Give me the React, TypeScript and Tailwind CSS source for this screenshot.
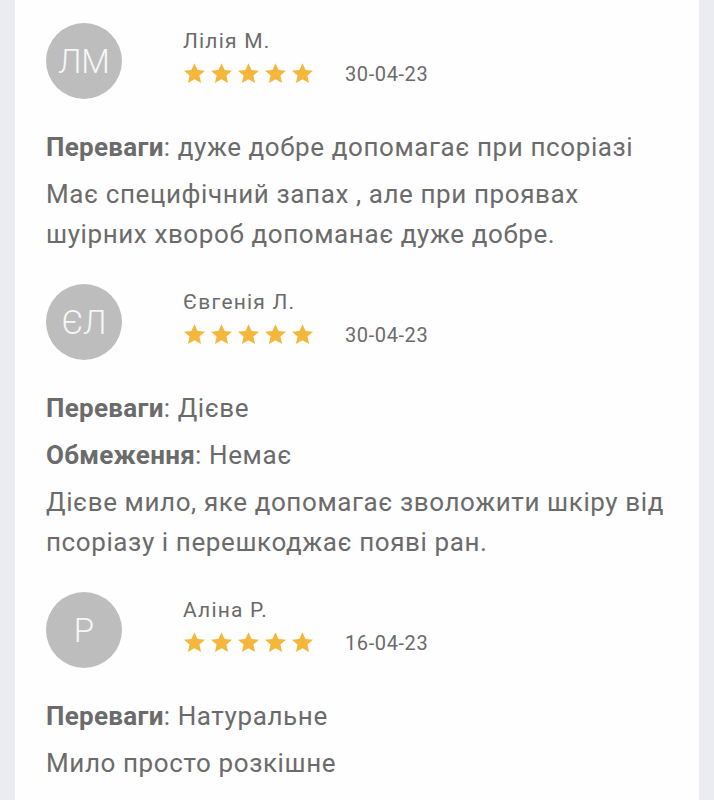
import React from "react";

const Star = () => (
  <svg width="23" height="23" viewBox="0 0 24 24" aria-hidden="true">
    <path
      d="M12 1.2l3.2 7.2 7.8.7-5.9 5.1 1.8 7.7L12 17.9l-6.9 4 1.8-7.7L1 9.1l7.8-.7z"
      fill="#f4b63b"
    />
  </svg>
);

type Review = {
  initials: string;
  name: string;
  date: string;
  pros: string;
  cons?: string;
  text: string[];
};

const reviews: Review[] = [
  {
    initials: "ЛМ",
    name: "Лілія М.",
    date: "30-04-23",
    pros: "дуже добре допомагає при псоріазі",
    text: ["Має специфічний запах , але при проявах", "шуірних хвороб допоманає дуже добре."],
  },
  {
    initials: "ЄЛ",
    name: "Євгенія Л.",
    date: "30-04-23",
    pros: "Дієве",
    cons: "Немає",
    text: ["Дієве мило, яке допомагає зволожити шкіру від", "псоріазу і перешкоджає появі ран."],
  },
  {
    initials: "Р",
    name: "Аліна Р.",
    date: "16-04-23",
    pros: "Натуральне",
    text: ["Мило просто розкішне"],
  },
];

function ReviewItem({ r }: { r: Review }) {
  return (
    <div className="mb-[30px]">
      <div className="flex items-start">
        <div className="w-[76px] h-[76px] rounded-full bg-[#bdbdbd] flex items-center justify-center shrink-0">
          <span className="text-[33px] font-light text-[#f7f7f7] leading-none">{r.initials}</span>
        </div>
        <div className="ml-[61px] pt-[6px] flex flex-col">
          <div className="text-[21px] leading-[24px] tracking-[1.2px] text-[#6b6b6b]">{r.name}</div>
          <div className="flex items-center mt-[8px] h-[24px]">
            <div className="flex items-center gap-[4px]">
              <Star />
              <Star />
              <Star />
              <Star />
              <Star />
            </div>
            <span className="ml-[31px] text-[20px] tracking-[0.6px] text-[#6b6b6b] leading-[24px] mt-[2px]">
              {r.date}
            </span>
          </div>
        </div>
      </div>
      <div className="mt-[28px] text-[26px] leading-[40px] tracking-[0.6px] text-[#6b6b6b]">
        <p className="mb-[7px]">
          <span className="font-bold tracking-[0.3px]">Переваги</span>: {r.pros}
        </p>
        {r.cons && (
          <p className="mb-[7px]">
            <span className="font-bold tracking-[0.3px]">Обмеження</span>: {r.cons}
          </p>
        )}
        <p className="mb-[7px]">
          {r.text.map((t, i) => (
            <React.Fragment key={i}>
              {t}
              {i < r.text.length - 1 && <br />}
            </React.Fragment>
          ))}
        </p>
      </div>
    </div>
  );
}

export default function App() {
  return (
    <div
      className="w-[714px] h-[800px] overflow-hidden bg-[#ebecf1] px-[15px]"
      style={{ fontFamily: "Roboto, 'Noto Sans', sans-serif" }}
    >
      <div className="bg-[#fefefe] h-full pt-[23px] pl-[31px] pr-[10px]">
        {reviews.map((r, i) => (
          <ReviewItem key={i} r={r} />
        ))}
      </div>
    </div>
  );
}
